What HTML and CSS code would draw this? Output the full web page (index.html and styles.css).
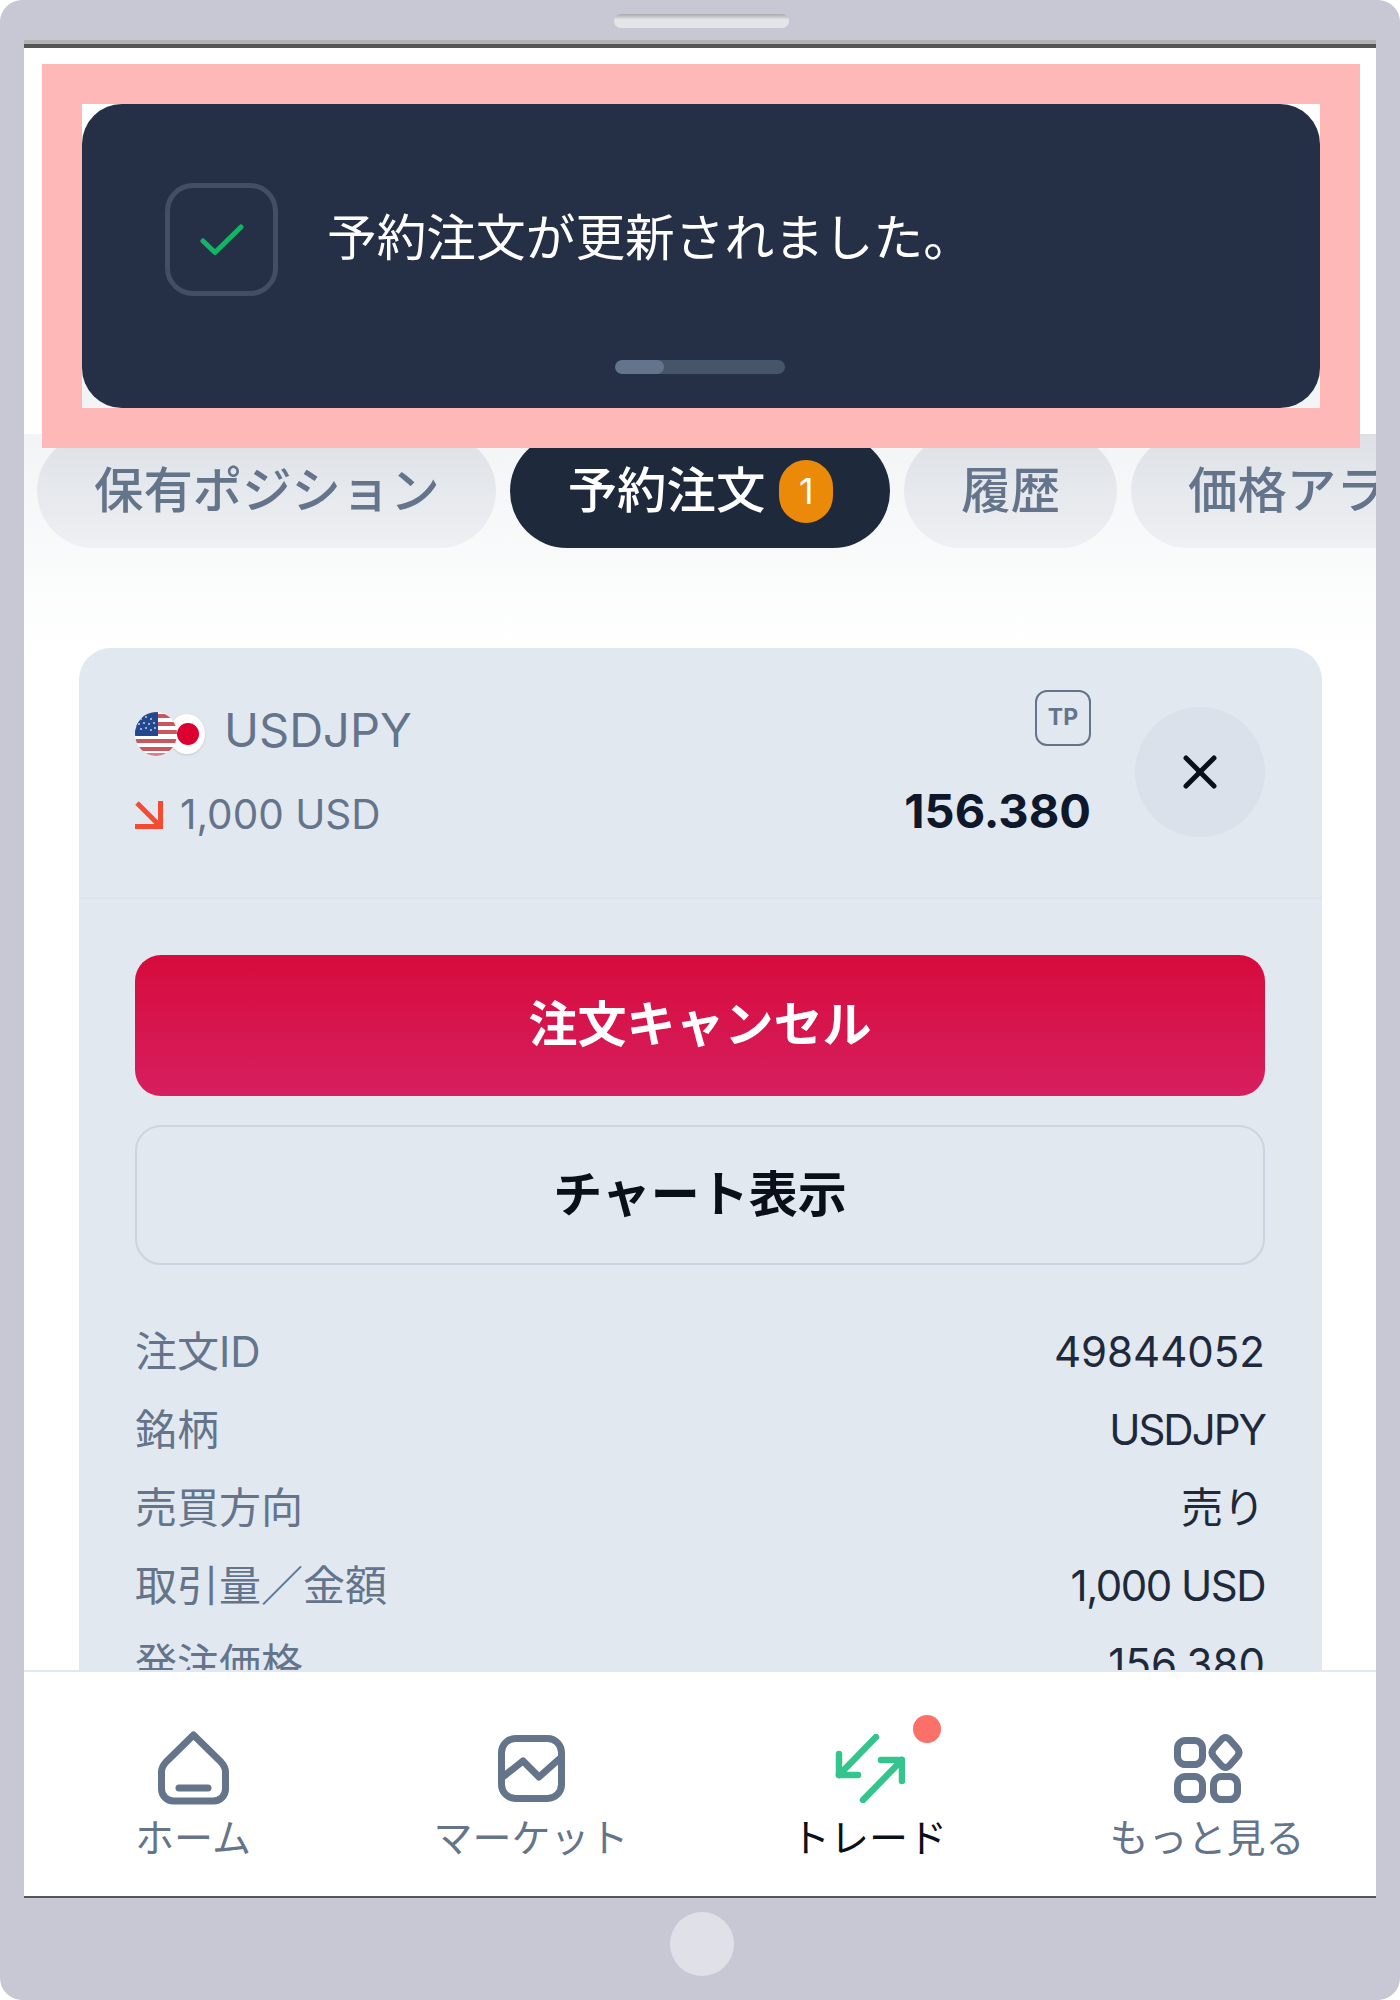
FILE: index.html
```html
<!DOCTYPE html>
<html lang="ja">
<head>
    <meta charset="UTF-8">
    <meta name="viewport" content="width=device-width, initial-scale=1.0">
    <title>予約注文</title>
    <link rel="stylesheet" href="styles.css">
</head>
<body>
    <div class="device">
        <div class="device-top"><div class="speaker"></div></div>

        <div class="screen">
            <main class="content">
                <div class="tabs">
                    <div class="tab">保有ポジション</div>
                    <div class="tab tab-active">予約注文<span class="tab-count">1</span></div>
                    <div class="tab">履歴</div>
                    <div class="tab">価格アラート</div>
                </div>

                <section class="card">
                    <div class="card-head">
                        <div class="card-title">
                            <div class="symbol">
                                <div class="flags">
                                    <svg class="flag-us" width="42" height="44" viewBox="0 0 42 44">
                                        <defs>
                                            <clipPath id="us-clip"><ellipse cx="21" cy="22" rx="21" ry="22"/></clipPath>
                                        </defs>
                                        <g clip-path="url(#us-clip)">
                                            <rect width="42" height="44" fill="#fff"/>
                                            <rect y="2" width="42" height="4" fill="#c9575f"/>
                                            <rect y="10" width="42" height="4" fill="#c9575f"/>
                                            <rect y="18" width="42" height="4" fill="#c9575f"/>
                                            <rect y="27" width="42" height="4" fill="#c9575f"/>
                                            <rect y="35" width="42" height="4" fill="#c9575f"/>
                                            <rect y="41" width="42" height="3" fill="#d8808a"/>
                                            <rect width="23" height="24" fill="#23488f"/>
                                            <g fill="#c4d0e6">
                                                <circle cx="6" cy="7" r="1"/><circle cx="11" cy="5" r="1"/><circle cx="16" cy="7" r="1"/>
                                                <circle cx="4" cy="12" r="1"/><circle cx="9" cy="11" r="1"/><circle cx="14" cy="12" r="1"/><circle cx="19" cy="11" r="1"/>
                                                <circle cx="6" cy="17" r="1"/><circle cx="11" cy="16" r="1"/><circle cx="16" cy="18" r="1"/><circle cx="20" cy="16" r="1"/>
                                            </g>
                                        </g>
                                    </svg>
                                    <div class="flag-jp"><span></span></div>
                                </div>
                                <span class="symbol-name">USDJPY</span>
                            </div>
                            <div class="amount">
                                <svg width="28" height="28" viewBox="0 0 28 28" fill="none" stroke="#f44b32" stroke-width="5">
                                    <path d="M2 2 L25 25"/>
                                    <path d="M0 25.5 H25.5 V0"/>
                                </svg>
                                <span>1,000 USD</span>
                            </div>
                        </div>
                        <div class="card-price">
                            <div class="tp-tag">TP</div>
                            <div class="price">156.380</div>
                        </div>
                        <button class="close-btn" aria-label="閉じる">
                            <svg width="34" height="34" viewBox="0 0 34 34" fill="none" stroke="#0b0f19" stroke-width="5" stroke-linecap="round">
                                <path d="M3 3 L31 31"/>
                                <path d="M31 3 L3 31"/>
                            </svg>
                        </button>
                    </div>

                    <div class="card-body">
                        <button class="btn btn-cancel">注文キャンセル</button>
                        <button class="btn btn-chart">チャート表示</button>

                        <div class="detail">
                            <div class="detail-row"><span>注文ID</span><span class="detail-value">49844052</span></div>
                            <div class="detail-row"><span>銘柄</span><span class="detail-value detail-symbol">USDJPY</span></div>
                            <div class="detail-row"><span>売買方向</span><span class="detail-value">売り</span></div>
                            <div class="detail-row"><span>取引量／金額</span><span class="detail-value detail-tight">1,000 USD</span></div>
                            <div class="detail-row"><span>発注価格</span><span class="detail-value">156.380</span></div>
                        </div>
                    </div>
                </section>
            </main>

            <nav class="nav">
                <div class="nav-item">
                    <div class="nav-icon">
                        <svg width="71" height="74" viewBox="0 0 71 74" fill="none" stroke="#64748b" stroke-width="7" stroke-linecap="round" stroke-linejoin="round">
                            <path d="M35.500 4 L63 31 Q67.500 36 67.500 41 V58 A12 12 0 0 1 55.500 70 H15.500 A12 12 0 0 1 3.500 58 V41 Q3.500 36 8 31 Z"/>
                            <path d="M21 57 H50"/>
                        </svg>
                    </div>
                    <span class="nav-label">ホーム</span>
                </div>
                <div class="nav-item">
                    <div class="nav-icon">
                        <svg width="67" height="67" viewBox="0 0 67 67" fill="none" stroke="#64748b" stroke-width="7" stroke-linejoin="round">
                            <rect x="3.500" y="3.500" width="60" height="60" rx="14"/>
                            <path d="M3.500 43 L25 26 L41 42 L63.500 22"/>
                        </svg>
                    </div>
                    <span class="nav-label">マーケット</span>
                </div>
                <div class="nav-item nav-item-active">
                    <div class="nav-icon">
                        <svg width="71" height="69" viewBox="0 0 71 69" fill="none" stroke="#34c48d" stroke-width="6.500" stroke-linecap="round" stroke-linejoin="round">
                            <path d="M42 3 L5 41"/>
                            <path d="M5 20 V41 H24"/>
                            <path d="M29 66 L68 26"/>
                            <path d="M47 26 H68 V47"/>
                        </svg>
                    </div>
                    <span class="nav-dot"></span>
                    <span class="nav-label">トレード</span>
                </div>
                <div class="nav-item">
                    <div class="nav-icon nav-icon-more">
                        <svg width="69" height="69" viewBox="0 0 69 69" fill="none" stroke="#64748b" stroke-width="7" stroke-linejoin="round">
                            <rect x="3.500" y="6.500" width="25" height="24" rx="8"/>
                            <path d="M47 6 Q51.500 1 56 6 L63 14 Q67 18.500 63 23 L56 31 Q51.500 36 47 31 L40 23 Q36 18.500 40 14 Z"/>
                            <rect x="3.500" y="42.500" width="25" height="23" rx="8"/>
                            <rect x="39.500" y="42.500" width="24" height="23" rx="8"/>
                        </svg>
                    </div>
                    <span class="nav-label">もっと見る</span>
                </div>
            </nav>

            <!-- highlighted toast, sits over the top of the page -->
            <div class="toast-highlight">
                <div class="toast-back">
                    <div class="toast">
                        <div class="toast-icon">
                            <svg width="44" height="32" viewBox="0 0 44 32" fill="none" stroke="#10b565" stroke-width="5" stroke-linecap="round" stroke-linejoin="round">
                                <path d="M3 17 L15 28.500 L41 3"/>
                            </svg>
                        </div>
                        <p class="toast-text">予約注文が更新されました。</p>
                        <div class="toast-progress"><div class="toast-progress-fill"></div></div>
                    </div>
                </div>
            </div>
        </div>

        <div class="device-bottom"><div class="home-btn"></div></div>
    </div>
</body>
</html>
```

FILE: styles.css
```css
* {
    box-sizing: border-box;
}

body {
    margin: 0;
    background-color: #fff;
    font-family: Inter, "Noto Sans CJK JP", sans-serif;
}

button {
    font-family: inherit;
    cursor: pointer;
}

.device {
    width: 1400px;
    height: 2000px;
    background-color: #c8c8d4;
    border-radius: 22px;
    overflow: hidden;
}

.device-top {
    height: 40px;
    padding: 14px 0 0 3px;
    display: flex;
    justify-content: center;
}

.speaker {
    width: 175px;
    height: 14px;
    border-radius: 7px;
    background: linear-gradient(#a9a9ae, #e4e5e7 40%, #e4e5e7);
}

.screen {
    position: relative;
    height: 1854px;
    margin: 4px 24px 0;
    display: flex;
    flex-direction: column;
    background-color: #fff;
    border-top: 4px solid #555;
    border-bottom: 2px solid #555;
    box-shadow: 0 -4px 0 #b2b2b2;
}

.content {
    flex: 1;
    min-height: 0;
    overflow: hidden;
    padding-top: 386px;
}

.tabs {
    display: flex;
    gap: 14px;
    height: 214px;
    padding: 0 0 100px 13px;
    overflow: hidden;
    background: linear-gradient(#f2f4f6, #fafbfb 65%, #fff);
}

.tab {
    flex-shrink: 0;
    display: flex;
    align-items: center;
    height: 114px;
    padding: 0 57px 10px;
    border-radius: 57px;
    background: linear-gradient(#dde1e6, #eef0f3);
    color: #64748b;
    font-size: 49.4px;
    font-weight: 500;
}

.tab:first-child {
    padding-right: 56px;
}

.tab-active {
    padding: 0 57px 10px 58px;
    background: #1e293b;
    color: #fff;
}

.tab-count {
    width: 54px;
    height: 63px;
    margin: 10px 0 0 14px;
    display: flex;
    align-items: center;
    justify-content: center;
    border-radius: 27px;
    background-color: #ea8a08;
    font-size: 36px;
    font-weight: 400;
}

.card {
    width: 1243px;
    margin-left: 55px;
    padding-bottom: 40px;
    background-color: #e2e8f0;
    border-radius: 32px 32px 0 0;
}

.card-head {
    display: flex;
    align-items: center;
    height: 251px;
    padding: 0 57px 0 56px;
    border-bottom: 2px solid #dbe3ee;
}

.card-title {
    flex: 1;
    align-self: flex-start;
    padding-top: 52px;
}

.symbol {
    display: flex;
    align-items: center;
}

.flags {
    display: flex;
    align-items: center;
    width: 89px;
    margin-top: 7px;
}

.flag-us {
    position: relative;
    z-index: 1;
}

.flag-jp {
    width: 36px;
    height: 40px;
    margin-left: -8px;
    display: flex;
    align-items: center;
    justify-content: center;
    border-radius: 50%;
    background-color: #fff;
    box-shadow: 0 1px 3px rgba(0, 0, 0, 0.12);
}

.flag-jp span {
    width: 22px;
    height: 22px;
    margin-left: 2px;
    border-radius: 50%;
    background-color: #dc0030;
}

.symbol-name {
    color: #64748b;
    font-size: 47px;
    line-height: 60px;
}

.amount {
    display: flex;
    align-items: center;
    gap: 17px;
    margin-top: 30px;
    color: #64748b;
    font-size: 40.5px;
    line-height: 50px;
}

.card-price {
    align-self: flex-start;
    padding-top: 42px;
}

.tp-tag {
    width: 56px;
    height: 56px;
    margin-left: auto;
    border: 2px solid #64748b;
    border-radius: 12px;
    color: #64748b;
    font-size: 23px;
    font-weight: 700;
    line-height: 50px;
    text-align: center;
}

.price {
    margin-top: 35px;
    color: #0f172a;
    font-size: 47px;
    font-weight: 700;
    line-height: 60px;
}

.close-btn {
    width: 130px;
    height: 130px;
    margin: -2px 0 0 44px;
    display: flex;
    align-items: center;
    justify-content: center;
    border: none;
    border-radius: 50%;
    background-color: #dbe1ea;
}

.card-body {
    padding: 56px 57px 0 56px;
}

.btn {
    display: block;
    width: 100%;
    padding: 0 0 10px;
    border-radius: 26px;
    font-size: 49px;
    font-weight: 700;
}

.btn-cancel {
    height: 141px;
    border: none;
    background: linear-gradient(#d70b3c, #d61f5f);
    color: #fff;
}

.btn-chart {
    height: 140px;
    margin-top: 29px;
    border: 2px solid #cbd5e1;
    background: none;
    color: #0b0f19;
}

.detail {
    margin-top: 48px;
}

.detail-row {
    display: flex;
    justify-content: space-between;
    height: 78px;
    color: #64748b;
    font-size: 42px;
    line-height: 78px;
}

.detail-value {
    color: #1e293b;
}

.detail-tight {
    letter-spacing: -1.5px;
}

.detail-symbol {
    letter-spacing: -2px;
}

.nav {
    display: grid;
    grid-template-columns: repeat(4, 1fr);
    height: 226px;
    flex-shrink: 0;
    padding-top: 58px;
    background-color: #fff;
    border-top: 2px solid #e2e8f0;
}

.nav-item {
    position: relative;
    display: flex;
    flex-direction: column;
    align-items: center;
}

.nav-icon {
    height: 76px;
    display: flex;
    align-items: center;
    justify-content: center;
}

.nav-icon-more {
    margin-left: 3px;
}

.nav-label {
    margin-top: 10px;
    color: #64748b;
    font-size: 39px;
    line-height: 44px;
}

.nav-item-active .nav-label {
    color: #0b0f19;
}

.nav-dot {
    position: absolute;
    top: -15px;
    left: 213px;
    width: 28px;
    height: 28px;
    border-radius: 50%;
    background-color: #fb7068;
}

.toast-highlight {
    position: absolute;
    top: 16px;
    left: 18px;
    width: 1318px;
    height: 384px;
    padding: 40px;
    background-color: #ffb8b8;
}

.toast-back {
    height: 100%;
    background: linear-gradient(#fff, #f2f3f5);
}

.toast {
    position: relative;
    height: 100%;
    padding: 79px 0 0 83px;
    display: flex;
    align-items: flex-start;
    background-color: #253047;
    border-radius: 40px;
}

.toast-icon {
    width: 113px;
    height: 113px;
    flex-shrink: 0;
    display: flex;
    align-items: center;
    justify-content: center;
    border: 5px solid #434e63;
    border-radius: 28px;
}

.toast-text {
    margin: 0 0 0 49px;
    color: #fff;
    font-size: 49.7px;
    line-height: 110px;
}

.toast-progress {
    position: absolute;
    left: 533px;
    bottom: 34px;
    width: 170px;
    height: 14px;
    border-radius: 7px;
    background-color: #475569;
    overflow: hidden;
}

.toast-progress-fill {
    width: 49px;
    height: 100%;
    border-radius: 7px;
    background-color: #64748b;
}

.device-bottom {
    padding: 14px 0 0 4px;
    display: flex;
    justify-content: center;
}

.home-btn {
    width: 64px;
    height: 64px;
    border-radius: 50%;
    background-color: #e0e0e8;
}
```
